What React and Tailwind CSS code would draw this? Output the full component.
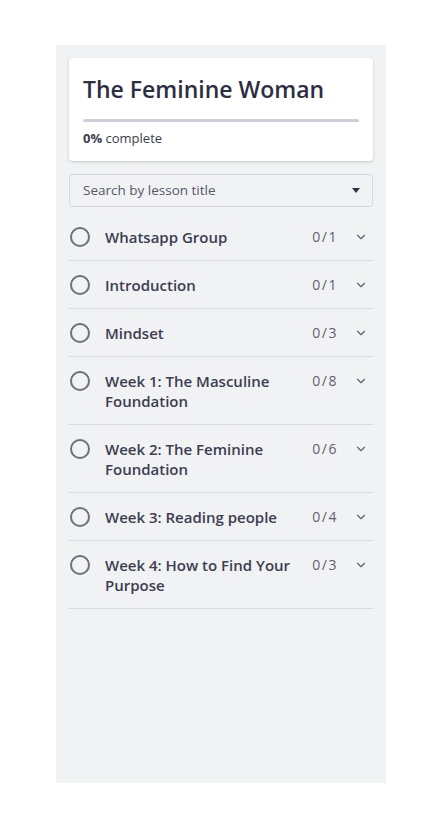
import { ChevronDown } from 'lucide-react'

const sections = [
  { title: 'Whatsapp Group', done: 0, total: 1 },
  { title: 'Introduction', done: 0, total: 1 },
  { title: 'Mindset', done: 0, total: 3 },
  { title: 'Week 1: The Masculine Foundation', done: 0, total: 8 },
  { title: 'Week 2: The Feminine Foundation', done: 0, total: 6 },
  { title: 'Week 3: Reading people', done: 0, total: 4 },
  { title: 'Week 4: How to Find Your Purpose', done: 0, total: 3 },
]

export default function App() {
  return (
    <div className="min-h-[831px] bg-white pt-[45px] font-['Open_Sans',sans-serif]">
      <div className="ml-[56px] h-[738px] w-[330px] bg-[#f1f2f4] px-[13px] pt-[13px]">
        <div className="rounded-[4px] bg-white px-[14px] pb-[13px] pt-[13px] shadow-[0_1px_3px_rgba(0,0,0,0.18)]">
          <h1 className="text-[23px] font-semibold leading-[36px] text-[#2c2e43]">
            The Feminine Woman
          </h1>
          <div className="mt-[12px] h-[3px] w-full rounded-full bg-[#cdd0d8]" />
          <p className="mt-[6px] text-[13px] leading-[20px] text-[#3a3c4e]">
            <span className="font-bold">0%</span> complete
          </p>
        </div>

        <div className="mt-[13px] flex h-[33px] items-center justify-between rounded-[3px] border border-[#d6d8de] bg-[#f1f2f4] pl-[13px] pr-[12px]">
          <span className="text-[13.5px] text-[#55576a]">Search by lesson title</span>
          <span className="h-0 w-0 border-x-[4px] border-t-[5px] border-x-transparent border-t-[#2f3142]" />
        </div>

        <ul className="mt-[6px]">
          {sections.map((s) => (
            <li
              key={s.title}
              className="flex items-start border-b border-[#d8dae0] pb-[13px] pt-[14px]"
            >
              <span className="ml-[1px] h-[20px] w-[20px] shrink-0 rounded-full border-[2px] border-[#6e6f7e]" />
              <span className="ml-[15px] w-[200px] text-[15px] font-semibold leading-[20px] text-[#3c3d50]">
                {s.title}
              </span>
              <span className="ml-auto text-[14px] leading-[20px] tracking-[1.5px] text-[#60616f]">
                {s.done}/{s.total}
              </span>
              <ChevronDown
                className="ml-[16px] mr-[5px] mt-[3px] text-[#60616f]"
                size={14}
                strokeWidth={2}
              />
            </li>
          ))}
        </ul>
      </div>
    </div>
  )
}
